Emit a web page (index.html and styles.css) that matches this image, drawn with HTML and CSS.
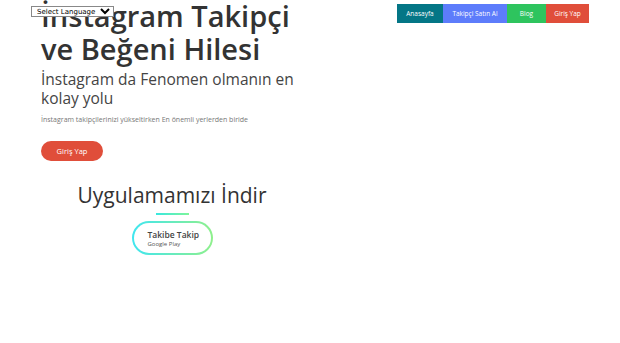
FILE: index.html
```html
<!DOCTYPE html>
<html lang="tr">
<head>
<meta charset="utf-8">
<title>Instagram Takipçi</title>
<link rel="stylesheet" href="styles.css">
</head>
<body>
<div class="translate">
  <select class="lang-select"><option>Select Language</option></select>
</div>
<div class="page">
  <section class="hero">
    <h1 class="title"><span class="title-line">İnstagram Takipçi</span> <span class="title-line">ve Beğeni Hilesi</span></h1>
    <h2 class="subtitle">İnstagram da Fenomen olmanın en kolay yolu</h2>
    <p class="lead">İnstagram takipçilerinizi yükseltirken En önemli yerlerden biride</p>
    <a class="btn-login" href="#">Giriş Yap</a>
    <div class="download">
      <h3 class="download-title">Uygulamamızı İndir</h3>
      <div class="divider"></div>
      <a class="store-btn" href="#">
        <span class="store-name">Takibe Takip</span>
        <span class="store-sub">Google Play</span>
      </a>
    </div>
  </section>
  <nav class="nav">
    <a class="nav-item home" href="#">Anasayfa</a>
    <a class="nav-item buy" href="#">Takipçi Satın Al</a>
    <a class="nav-item blog" href="#">Blog</a>
    <a class="nav-item login" href="#">Giriş Yap</a>
  </nav>
</div>
</body>
</html>
```
FILE: styles.css
```css
* { box-sizing: border-box; }
html, body { margin: 0; padding: 0; background: #fff; }
body { font-family: "Open Sans", "DejaVu Sans", sans-serif; color: #333; overflow: hidden; }

.translate { position: absolute; left: 31px; top: 6px; z-index: 5; display: flex; }
.lang-select {
  display: block;
  width: 83px; height: 11px; font-size: 7px; padding: 0 0 0 1px; margin: 0;
  font-family: "DejaVu Sans", sans-serif; border: 1px solid #888; background: #fff; color: #000;
  border-radius: 0; line-height: 9px;
}

.page { display: flex; justify-content: space-between; padding: 0 31px 0 41px; }

.hero { width: 262px; flex-shrink: 0; }
.title { font-size: 29px; font-weight: 600; line-height: 33px; margin: -1px 0 0; color: #333; }
.title-line { display: block; white-space: nowrap; }
.subtitle { font-size: 15.5px; font-weight: 400; line-height: 19px; margin: 5px 0 0; color: #444; }
.lead { font-size: 7px; color: #777; margin: 6px 0 0; line-height: 12px; }
.btn-login {
  display: inline-flex; align-items: center; justify-content: center;
  width: 62px; height: 20px; margin-top: 15px; border-radius: 10px;
  background: #e04e3a; color: #fff; font-size: 7.5px; text-decoration: none;
}

.download { display: flex; flex-direction: column; align-items: center; margin-top: 20px; }
.download-title { font-size: 21px; font-weight: 400; margin: 0; line-height: 28px; color: #333; }
.divider { width: 33px; height: 2px; margin-top: 4px; background: linear-gradient(90deg, #38e8e0, #7ef59a); }
.store-btn {
  margin-top: 6px; width: 81px; height: 34px; border-radius: 17px;
  border: 2px solid transparent;
  background: linear-gradient(#fff, #fff) padding-box, linear-gradient(90deg, #3fe6f0, #8ff08c) border-box;
  display: flex; flex-direction: column; justify-content: center; padding-left: 14px;
  text-decoration: none;
}
.store-name { font-size: 8.5px; font-weight: 600; color: #444; line-height: 11px; }
.store-sub { font-size: 6px; color: #555; line-height: 8px; }

.nav { display: flex; margin-top: 4px; height: 19px; align-self: flex-start; flex-shrink: 0; }
.nav-item {
  display: flex; align-items: center; justify-content: center;
  font-size: 6.5px; color: #fff; text-decoration: none; height: 19px; white-space: nowrap;
}
.home { width: 46px; background: #047686; }
.buy { width: 64px; background: #5d7cfb; }
.blog { width: 39px; background: #2ec45e; }
.login { width: 43px; background: #e04e3a; }
```
